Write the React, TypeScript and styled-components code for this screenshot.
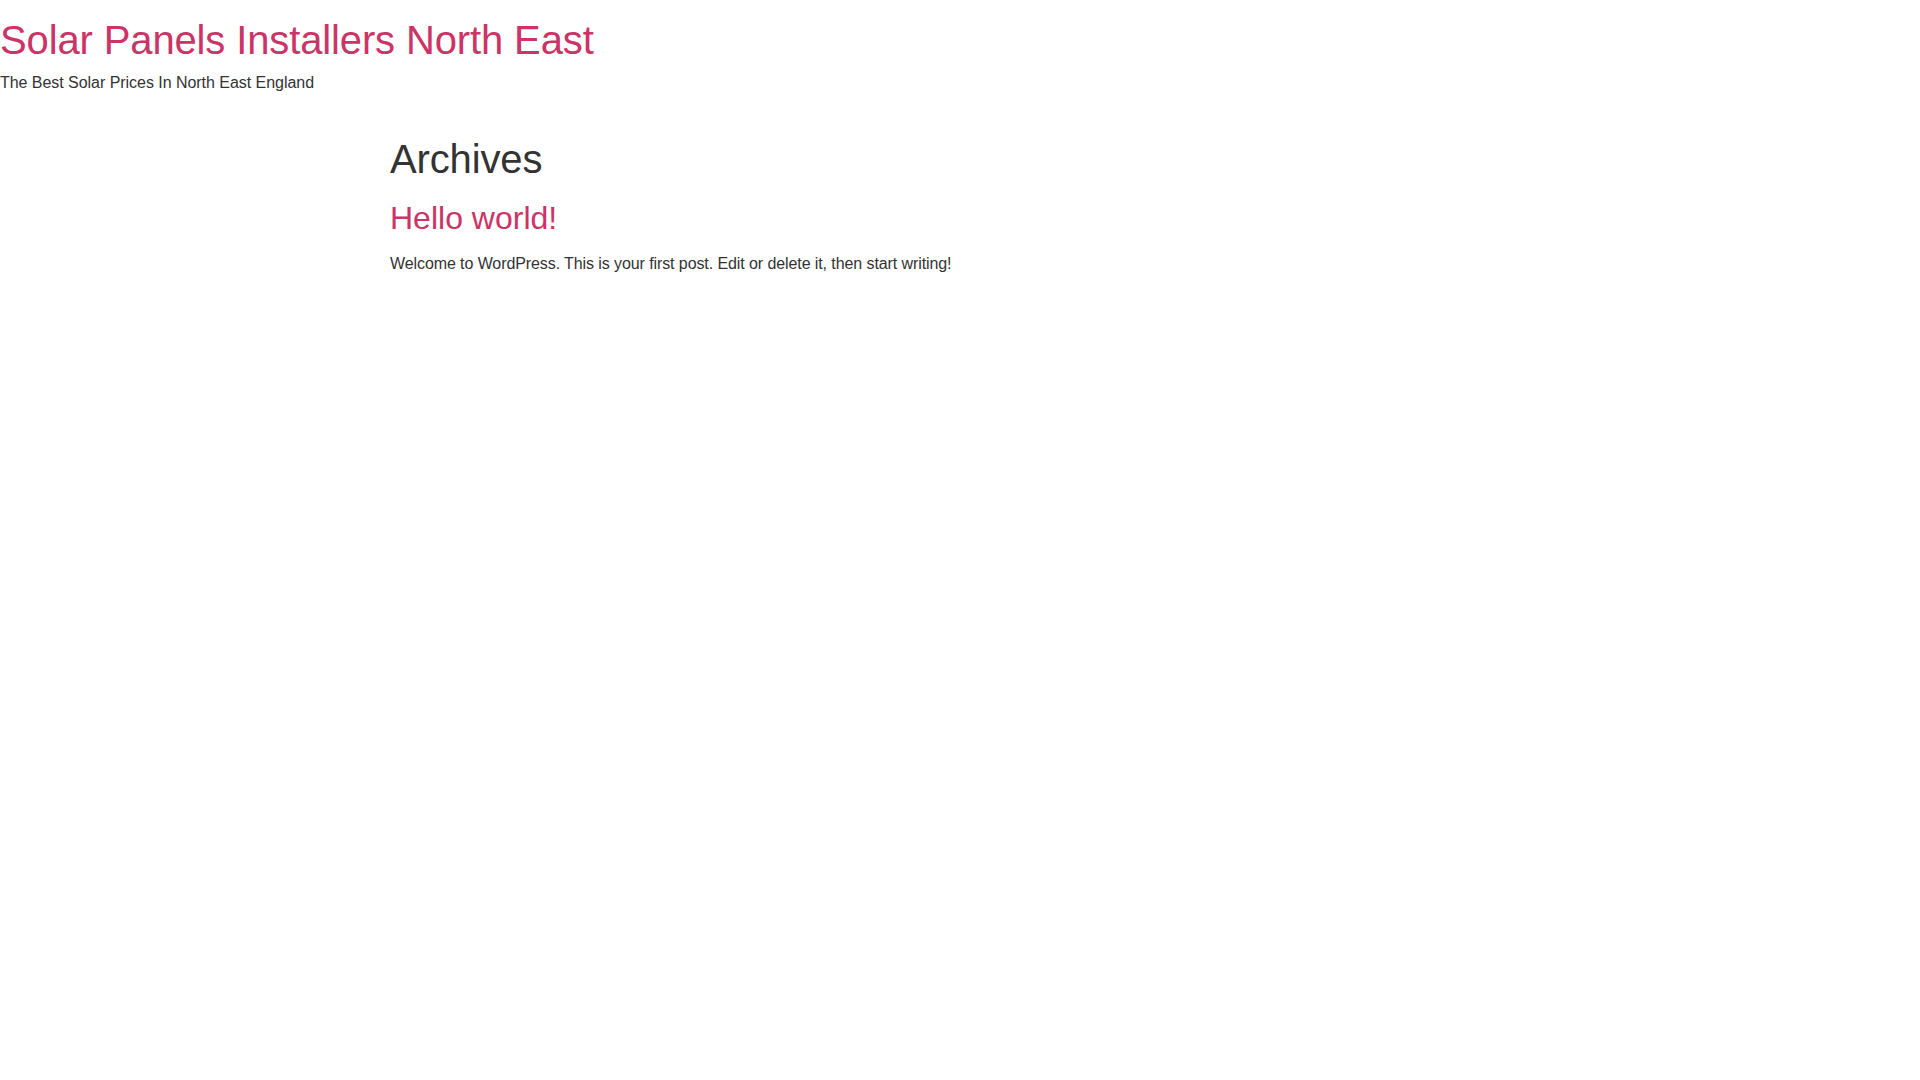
import styled, { createGlobalStyle } from "styled-components";

const GlobalStyle = createGlobalStyle`
  body {
    margin: 0;
    background: #fff;
    color: #333;
    font-family: "Liberation Sans", Arial, sans-serif;
    font-size: 16px;
    line-height: 1.5;
    letter-spacing: -0.08px;
  }
`;

const SiteHeader = styled.header`
  display: flex;
  flex-direction: column;
  padding-top: 16px;
`;

const SiteTitle = styled.h1`
  margin: 0 0 7px;
  font-size: 40px;
  font-weight: 400;
  line-height: 1.2;
  letter-spacing: -0.13px;

  a {
    color: #cc3366;
    text-decoration: none;
  }
`;

const Tagline = styled.p`
  margin: 0;
  font-size: 16px;
  line-height: 24px;
  color: #333;
  letter-spacing: -0.04px;
`;

const Main = styled.main`
  max-width: 1140px;
  margin: 0 auto;
  padding-top: 40px;
`;

const PageTitle = styled.h1`
  margin: 0 0 16px;
  font-size: 40px;
  font-weight: 400;
  line-height: 1.2;
  color: #333;
  letter-spacing: -0.13px;
`;

const PostTitle = styled.h2`
  margin: 0 0 15px;
  font-size: 32px;
  font-weight: 400;
  line-height: 1.2;
  letter-spacing: 0;

  a {
    color: #cc3366;
    text-decoration: none;
  }
`;

const Excerpt = styled.p`
  margin: 0;
  font-size: 16px;
  line-height: 24px;
  letter-spacing: -0.09px;
`;

const posts = [
  {
    title: "Hello world!",
    excerpt:
      "Welcome to WordPress. This is your first post. Edit or delete it, then start writing!",
  },
];

const App = () => {
  return (
    <>
      <GlobalStyle />
      <SiteHeader>
        <SiteTitle>
          <a href="#">Solar Panels Installers North East</a>
        </SiteTitle>
        <Tagline>The Best Solar Prices In North East England</Tagline>
      </SiteHeader>
      <Main>
        <PageTitle>Archives</PageTitle>
        {posts.map((post) => (
          <article key={post.title}>
            <PostTitle>
              <a href="#">{post.title}</a>
            </PostTitle>
            <Excerpt>{post.excerpt}</Excerpt>
          </article>
        ))}
      </Main>
    </>
  );
};

export default App;
